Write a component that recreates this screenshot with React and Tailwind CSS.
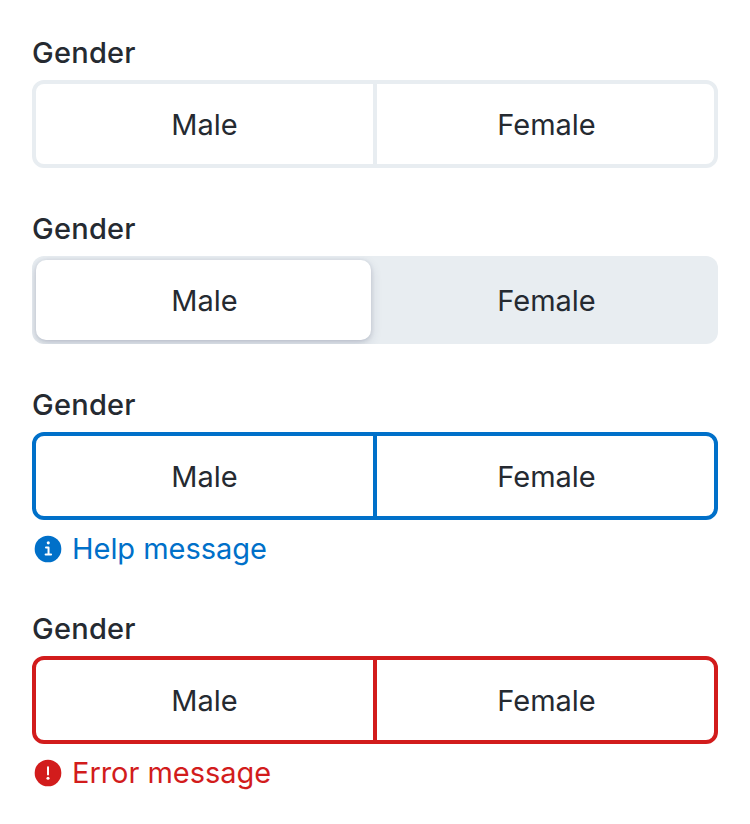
const borders = {
  neutral: "border-[#e8edf1]",
  info: "border-[#0070c9]",
  error: "border-[#d21c1c]",
};
const dividers = {
  neutral: "bg-[#e8edf1]",
  info: "bg-[#0070c9]",
  error: "bg-[#d21c1c]",
};

function Label() {
  return <div className="mb-3 h-8 text-[29px] leading-[33px] font-medium tracking-[0.25px]">Gender</div>;
}

function Segments({ tone }) {
  return (
    <div className={`flex h-[88px] rounded-xl border-4 bg-white ${borders[tone]}`}>
      <button className="w-[337px] pt-0.5">Male</button>
      <div className={`w-1 ${dividers[tone]}`} />
      <button className="flex-1 pt-0.5 pl-0.5">Female</button>
    </div>
  );
}

function SelectedSegments() {
  return (
    <div className="flex h-[88px] overflow-hidden rounded-xl bg-[#e8edf1] p-1">
      <button className="w-[335px] rounded-[10px] bg-white pt-0.5 pl-0.5 shadow-[0_1px_4px_rgba(37,42,80,0.16),0_4px_12px_rgba(37,42,80,0.14)]">Male</button>
      <button className="ml-1.5 flex-1 pt-0.5 pl-0.5">Female</button>
    </div>
  );
}

function Message({ error, children }) {
  return (
    <div className={`mt-[11px] flex h-9 items-center text-[29px] leading-9 tracking-[-0.04px] ${error ? "text-[#d21c1c]" : "text-[#0070c9]"}`}>
      <svg className="mr-2" width="32" height="32" viewBox="0 0 24 24" fill="currentColor">
        <circle cx="12" cy="12" r="10" />
        {error ? (
          <g fill="white">
            <rect x="11.25" y="7" width="1.5" height="6.8" rx=".75" />
            <circle cx="12" cy="16" r="1.15" />
          </g>
        ) : (
          <g fill="none" stroke="white" strokeWidth="1.5" strokeLinecap="round" strokeLinejoin="round">
            <circle cx="12.2" cy="7.4" r="1.15" fill="white" stroke="none" />
            <path d="M10.5 10.9h1.9v5.3M10.2 16.2h4.1" />
          </g>
        )}
      </svg>
      <span>{children}</span>
    </div>
  );
}

export default function App() {
  return (
    <main className="h-[824px] w-[750px] bg-white px-8 pt-9 font-['Inter',sans-serif] text-[29px] font-normal text-[#252a31]">
      <section className="h-44"><Label /><Segments tone="neutral" /></section>
      <section className="h-44"><Label /><SelectedSegments /></section>
      <section className="h-56"><Label /><Segments tone="info" /><Message>Help message</Message></section>
      <section><Label /><Segments tone="error" /><Message error>Error message</Message></section>
    </main>
  );
}
